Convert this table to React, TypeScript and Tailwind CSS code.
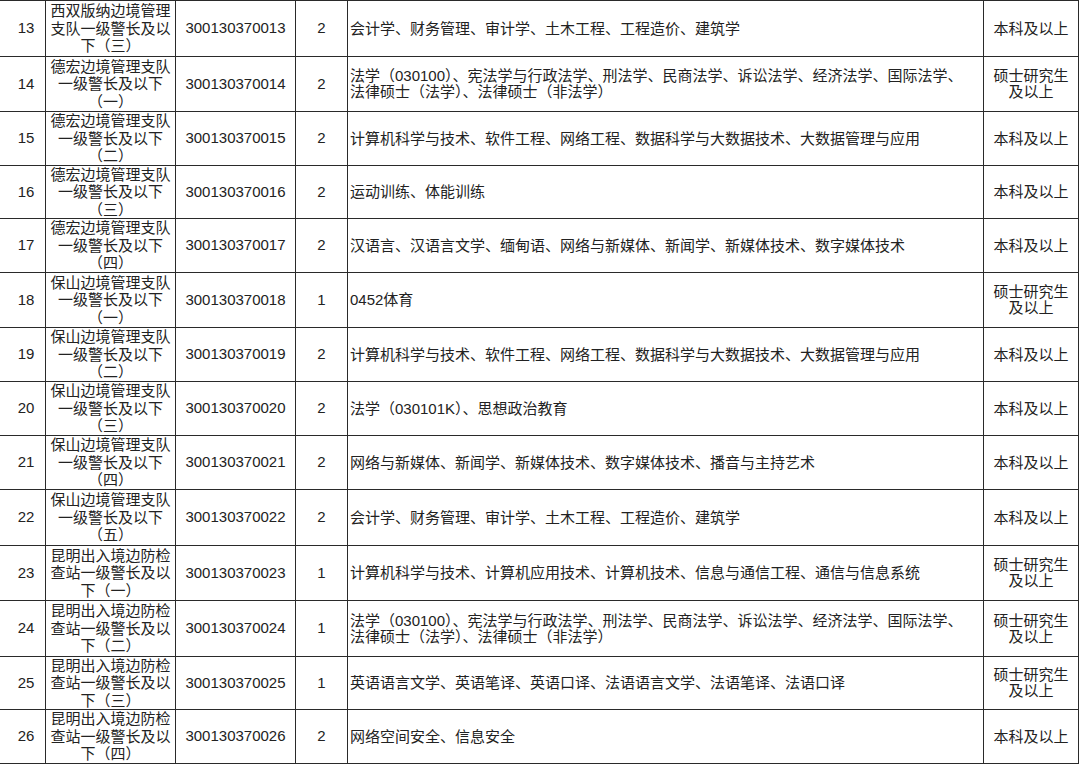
const rows = [
  { no: 13, h: 'h-[56px]', name: ['西双版纳边境管理', '支队一级警长及以', '下（三）'], code: '300130370013', n: 1 + 1, major: ['会计学、财务管理、审计学、土木工程、工程造价、建筑学'], edu: ['本科及以上'] },
  { no: 14, h: 'h-[55px]', name: ['德宏边境管理支队', '一级警长及以下', '（一）'], code: '300130370014', n: 2, major: ['法学（030100）、宪法学与行政法学、刑法学、民商法学、诉讼法学、经济法学、国际法学、', '法律硕士（法学）、法律硕士（非法学）'], edu: ['硕士研究生', '及以上'] },
  { no: 15, h: 'h-[54px]', name: ['德宏边境管理支队', '一级警长及以下', '（二）'], code: '300130370015', n: 2, major: ['计算机科学与技术、软件工程、网络工程、数据科学与大数据技术、大数据管理与应用'], edu: ['本科及以上'] },
  { no: 16, h: 'h-[53px]', name: ['德宏边境管理支队', '一级警长及以下', '（三）'], code: '300130370016', n: 2, major: ['运动训练、体能训练'], edu: ['本科及以上'] },
  { no: 17, h: 'h-[54px]', name: ['德宏边境管理支队', '一级警长及以下', '（四）'], code: '300130370017', n: 2, major: ['汉语言、汉语言文学、缅甸语、网络与新媒体、新闻学、新媒体技术、数字媒体技术'], edu: ['本科及以上'] },
  { no: 18, h: 'h-[55px]', name: ['保山边境管理支队', '一级警长及以下', '（一）'], code: '300130370018', n: 1, major: ['0452体育'], edu: ['硕士研究生', '及以上'] },
  { no: 19, h: 'h-[54px]', name: ['保山边境管理支队', '一级警长及以下', '（二）'], code: '300130370019', n: 2, major: ['计算机科学与技术、软件工程、网络工程、数据科学与大数据技术、大数据管理与应用'], edu: ['本科及以上'] },
  { no: 20, h: 'h-[54px]', name: ['保山边境管理支队', '一级警长及以下', '（三）'], code: '300130370020', n: 2, major: ['法学（030101K）、思想政治教育'], edu: ['本科及以上'] },
  { no: 21, h: 'h-[54px]', name: ['保山边境管理支队', '一级警长及以下', '（四）'], code: '300130370021', n: 2, major: ['网络与新媒体、新闻学、新媒体技术、数字媒体技术、播音与主持艺术'], edu: ['本科及以上'] },
  { no: 22, h: 'h-[56px]', name: ['保山边境管理支队', '一级警长及以下', '（五）'], code: '300130370022', n: 2, major: ['会计学、财务管理、审计学、土木工程、工程造价、建筑学'], edu: ['本科及以上'] },
  { no: 23, h: 'h-[55px]', name: ['昆明出入境边防检', '查站一级警长及以', '下（一）'], code: '300130370023', n: 1, major: ['计算机科学与技术、计算机应用技术、计算机技术、信息与通信工程、通信与信息系统'], edu: ['硕士研究生', '及以上'] },
  { no: 24, h: 'h-[56px]', name: ['昆明出入境边防检', '查站一级警长及以', '下（二）'], code: '300130370024', n: 1, major: ['法学（030100）、宪法学与行政法学、刑法学、民商法学、诉讼法学、经济法学、国际法学、', '法律硕士（法学）、法律硕士（非法学）'], edu: ['硕士研究生', '及以上'] },
  { no: 25, h: 'h-[53px]', name: ['昆明出入境边防检', '查站一级警长及以', '下（三）'], code: '300130370025', n: 1, major: ['英语语言文学、英语笔译、英语口译、法语语言文学、法语笔译、法语口译'], edu: ['硕士研究生', '及以上'] },
  { no: 26, h: 'h-[54px]', name: ['昆明出入境边防检', '查站一级警长及以', '下（四）'], code: '300130370026', n: 2, major: ['网络空间安全、信息安全'], edu: ['本科及以上'] },
];

const cell = 'border-r border-[#2a2a2a] flex items-center overflow-hidden';

export default function App() {
  return (
    <div className="w-[1080px] h-[765px] bg-white overflow-hidden font-['Liberation_Sans','Noto_Sans_CJK_SC',sans-serif] text-[15px] text-[#222]">
      <div className="w-[1079px] border-t border-[#2a2a2a]">
        {rows.map((r) => (
          <div key={r.no} className={`${r.h} flex border-b border-[#2a2a2a]`}>
            {/* seq no */}
            <div className={`${cell} w-[46px] justify-center pl-[7px]`}>{r.no}</div>

            {/* unit / post name */}
            <div className={`${cell} w-[130px] justify-center text-center leading-[17.5px] whitespace-nowrap`}>
              <div>
                {r.name.map((l, i) => (
                  <div key={i}>{l}</div>
                ))}
              </div>
            </div>

            <div className={`${cell} w-[120px] justify-center`}>{r.code}</div>
            <div className={`${cell} w-[52px] justify-center`}>{r.n}</div>

            {/* majors */}
            <div className={`${cell} w-[636px] pl-[2px] leading-[16px] whitespace-nowrap`}>
              <div>
                {r.major.map((l, i) => (
                  <div key={i}>{l}</div>
                ))}
              </div>
            </div>

            {/* education */}
            <div className={`${cell} w-[95px] justify-center text-center leading-[16px] whitespace-nowrap`}>
              <div>
                {r.edu.map((l, i) => (
                  <div key={i}>{l}</div>
                ))}
              </div>
            </div>
          </div>
        ))}
      </div>
    </div>
  );
}
